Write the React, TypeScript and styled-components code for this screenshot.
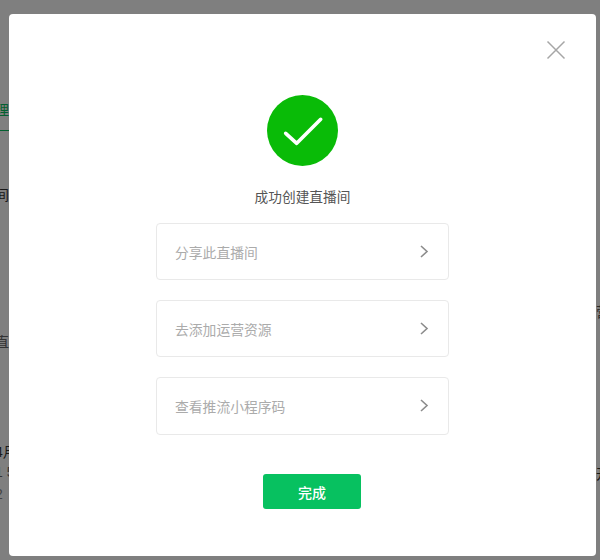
import { createGlobalStyle, styled } from "styled-components";

const GlobalStyle = createGlobalStyle`
    html, body {
        margin: 0;
        padding: 0;
        background: #fff;
    }
    body {
        font-family: "Liberation Sans", "Noto Sans CJK SC", sans-serif;
    }
`;

const Page = styled.div`
    position: relative;
    width: 600px;
    height: 560px;
    overflow: hidden;
    display: flex;
    justify-content: space-between;
`;

const SideColumn = styled.div`
    display: flex;
    flex-direction: column;
    width: 60px;
`;

const RightColumn = styled(SideColumn)`
    align-items: flex-start;
    margin-right: -56px;
`;

const Tab = styled.div`
    margin-top: 100px;
    height: 30px;
    line-height: 21px;
    width: 60px;
    border-bottom: 1px solid #07c160;
    color: #07c160;
    font-size: 14px;
    text-indent: -5px;
`;

const PageText = styled.div<{ $top: number; $color?: string; $indent?: number }>`
    margin-top: ${(p) => p.$top}px;
    height: 20px;
    line-height: 20px;
    font-size: 14px;
    white-space: nowrap;
    color: ${(p) => p.$color ?? "#333"};
    text-indent: ${(p) => p.$indent ?? -5}px;
`;

const Scrim = styled.div`
    position: absolute;
    inset: 0;
    box-sizing: border-box;
    padding: 14px 4px 4px 9px;
    display: flex;
    background: rgba(0, 0, 0, 0.5);
`;

const Modal = styled.div`
    position: relative;
    flex: 1;
    box-sizing: border-box;
    padding-top: 81px;
    display: flex;
    flex-direction: column;
    align-items: center;
    background: #fff;
    border-radius: 4px;
`;

const CloseButton = styled.button`
    position: absolute;
    top: 26px;
    right: 30px;
    width: 20px;
    height: 20px;
    padding: 0;
    border: 0;
    background: none;
    display: block;
    svg {
        display: block;
    }
`;

const SuccessIcon = styled.svg`
    display: block;
    width: 71px;
    height: 71px;
    margin-left: -1px;
`;

const Title = styled.h2`
    margin: 22px 0 0;
    height: 20px;
    line-height: 20px;
    font-size: 13.7px;
    font-weight: 400;
    color: #555;
`;

const ActionList = styled.div`
    margin-top: 14.6px;
    display: flex;
    flex-direction: column;
    gap: 20px;
    width: 293px;
`;

const ActionRow = styled.div`
    box-sizing: border-box;
    height: 57.33px;
    padding: 0 19px 0 18px;
    display: flex;
    align-items: center;
    justify-content: space-between;
    border: 1px solid #e9e9e9;
    border-radius: 4px;
    background: #fff;
`;

const ActionLabel = styled.span`
    padding-top: 1px;
    font-size: 13.8px;
    color: #ababab;
`;

const Chevron = styled.svg`
    display: block;
    width: 10px;
    height: 13px;
`;

const DoneButton = styled.button`
    margin-top: 39.7px;
    margin-left: 19px;
    width: 98px;
    height: 35px;
    padding: 0;
    border: 0;
    border-radius: 3px;
    background: #07c160;
    color: #fff;
    font-family: inherit;
    font-size: 14px;
    font-weight: 500;
`;

const actions = ["分享此直播间", "去添加运营资源", "查看推流小程序码"];

export default function App() {
    return (
        <Page>
            <GlobalStyle />
            <SideColumn>
                <Tab>理</Tab>
                <PageText $top={54}>间</PageText>
                <PageText $top={127} $color="#666">直</PageText>
                <PageText $top={90}>4月</PageText>
                <PageText $top={0} $color="#666">1 5</PageText>
                <PageText $top={2} $color="#888">2</PageText>
            </SideColumn>
            <RightColumn>
                <PageText $top={302} $color="#555" $indent={0}>营</PageText>
                <PageText $top={142} $indent={0}>开</PageText>
            </RightColumn>
            <Scrim>
                <Modal>
                    <CloseButton aria-label="关闭">
                        <svg width="20" height="20" viewBox="0 0 20 20" fill="none">
                            <path d="M1.5 1.5 18.5 18.5M18.5 1.5 1.5 18.5" stroke="#a6a6a6" strokeWidth="1.5" />
                        </svg>
                    </CloseButton>
                    <SuccessIcon viewBox="0 0 71 71">
                        <circle cx="35.5" cy="35.5" r="35.5" fill="#09bb07" />
                        <path
                            d="M18.7 38.3 29.7 48.3 53.7 24.3"
                            fill="none"
                            stroke="#fff"
                            strokeWidth="3.6"
                            strokeLinecap="round"
                            strokeLinejoin="round"
                        />
                    </SuccessIcon>
                    <Title>成功创建直播间</Title>
                    <ActionList>
                        {actions.map((label) => (
                            <ActionRow key={label}>
                                <ActionLabel>{label}</ActionLabel>
                                <Chevron viewBox="0 0 10 13" fill="none">
                                    <path d="M2 1 8 6.5 2 12" stroke="#8c8c8c" strokeWidth="1.6" />
                                </Chevron>
                            </ActionRow>
                        ))}
                    </ActionList>
                    <DoneButton>完成</DoneButton>
                </Modal>
            </Scrim>
        </Page>
    );
}
